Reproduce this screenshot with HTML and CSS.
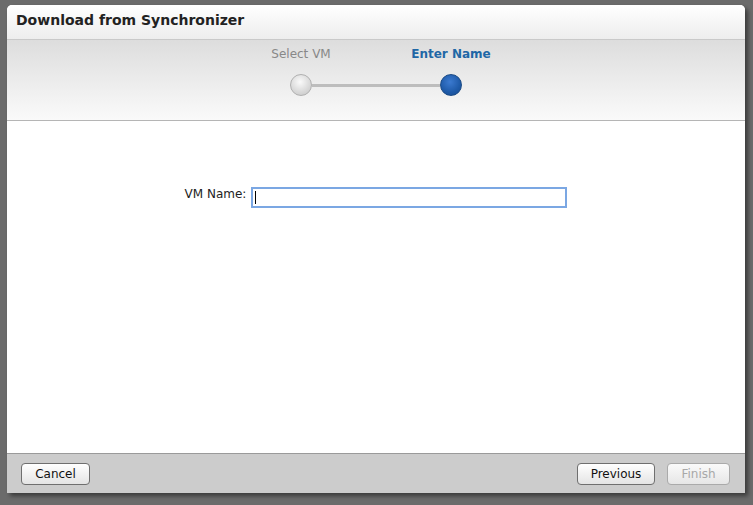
FILE: index.html
```html
<!DOCTYPE html>
<html lang="en">
<head>
    <meta charset="UTF-8">
    <title>Download from Synchronizer</title>
    <link rel="stylesheet" href="styles.css">
</head>
<body>
    <div class="dialog">
        <div class="dialog-title">Download from Synchronizer</div>

        <div class="steps">
            <div class="step-labels">
                <div class="step-label">Select VM</div>
                <div class="step-label current">Enter Name</div>
            </div>
            <div class="step-track">
                <div class="step-dot"></div>
                <div class="step-line"></div>
                <div class="step-dot current"></div>
            </div>
        </div>

        <div class="dialog-body">
            <div class="form-row">
                <label class="form-label" for="vmName">VM Name:</label>
                <div class="input-wrap">
                    <input class="form-input" id="vmName" type="text" autofocus>
                    <span class="caret"></span>
                </div>
            </div>
        </div>

        <div class="dialog-footer">
            <button class="btn">Cancel</button>
            <div class="footer-right">
                <button class="btn btn-prev">Previous</button>
                <button class="btn btn-finish" disabled>Finish</button>
            </div>
        </div>
    </div>
</body>
</html>
```

FILE: styles.css
```css
html, body {
    margin: 0;
    height: 100%;
}
body {
    background: #6b6b6b;
    font-family: "DejaVu Sans", Verdana, sans-serif;
    overflow: hidden;
}
.dialog {
    margin: 5px 0 0 7px;
    width: 738px;
    height: 488px;
    background: #fff;
    border-radius: 5px 5px 0 0;
    box-shadow: 3px 3px 4px rgba(0,0,0,0.45);
    display: flex;
    flex-direction: column;
    overflow: hidden;
}
.dialog-title {
    height: 34px;
    line-height: 30px;
    padding-left: 9px;
    font-size: 14px;
    font-weight: bold;
    color: #222;
    background: linear-gradient(#ffffff, #ededed);
    border-bottom: 1px solid #c9c9c9;
}
.steps {
    height: 80px;
    background: linear-gradient(#dddddd, #fafafa);
    border-bottom: 1px solid #b5b5b5;
    display: flex;
    flex-direction: column;
    align-items: center;
}
.step-labels {
    display: flex;
    margin-top: 6px;
}
.step-label {
    width: 150px;
    text-align: center;
    font-size: 12px;
    line-height: 16px;
    color: #888;
}
.step-label.current {
    color: #1f67a6;
    font-weight: bold;
}
.step-track {
    display: flex;
    align-items: center;
    width: 172px;
    margin-top: 12px;
}
.step-dot {
    width: 20px;
    height: 20px;
    border-radius: 50%;
    border: 1px solid #b0b0b0;
    background: radial-gradient(circle at 45% 35%, #fafafa, #d8d8d8 60%, #c4c4c4);
}
.step-dot.current {
    border-color: #1a4a85;
    background: radial-gradient(circle at 45% 35%, #3b7ad0, #1e5aa8 60%, #184b8e);
}
.step-line {
    flex: 1;
    height: 3px;
    background: #bdbdbd;
}
.dialog-body {
    flex: 1;
    background: #fff;
}
.form-row {
    display: flex;
    justify-content: center;
    align-items: flex-start;
    gap: 5px;
    margin-top: 66px;
}
.form-label {
    font-size: 12px;
    line-height: 14px;
    color: #222;
}
.input-wrap {
    position: relative;
}
.form-input {
    display: block;
    box-sizing: border-box;
    width: 316px;
    height: 21px;
    margin: 0;
    border: 2px solid #7ba7e3;
    padding: 0 3px;
    font-family: inherit;
    font-size: 12px;
    outline: none;
    caret-color: transparent;
}
.caret {
    position: absolute;
    left: 4px;
    top: 4px;
    width: 1px;
    height: 13px;
    background: #000;
}
.dialog-footer {
    height: 39px;
    background: #cccccc;
    border-top: 1px solid #9a9a9a;
    display: flex;
    align-items: center;
    justify-content: space-between;
    padding: 0 15px 0 14px;
}
.footer-right {
    display: flex;
    gap: 12px;
}
.btn {
    box-sizing: border-box;
    height: 22px;
    padding: 0;
    border: 1px solid #6f6f6f;
    border-radius: 4px;
    background: linear-gradient(#ffffff, #e4e4e4);
    font-family: inherit;
    font-size: 12px;
    color: #111;
    width: 69px;
}
.btn-prev {
    width: 78px;
}
.btn-finish {
    width: 63px;
    color: #a8a8a8;
    border-color: #aaaaaa;
    background: linear-gradient(#fafafa, #e6e6e6);
}
```
